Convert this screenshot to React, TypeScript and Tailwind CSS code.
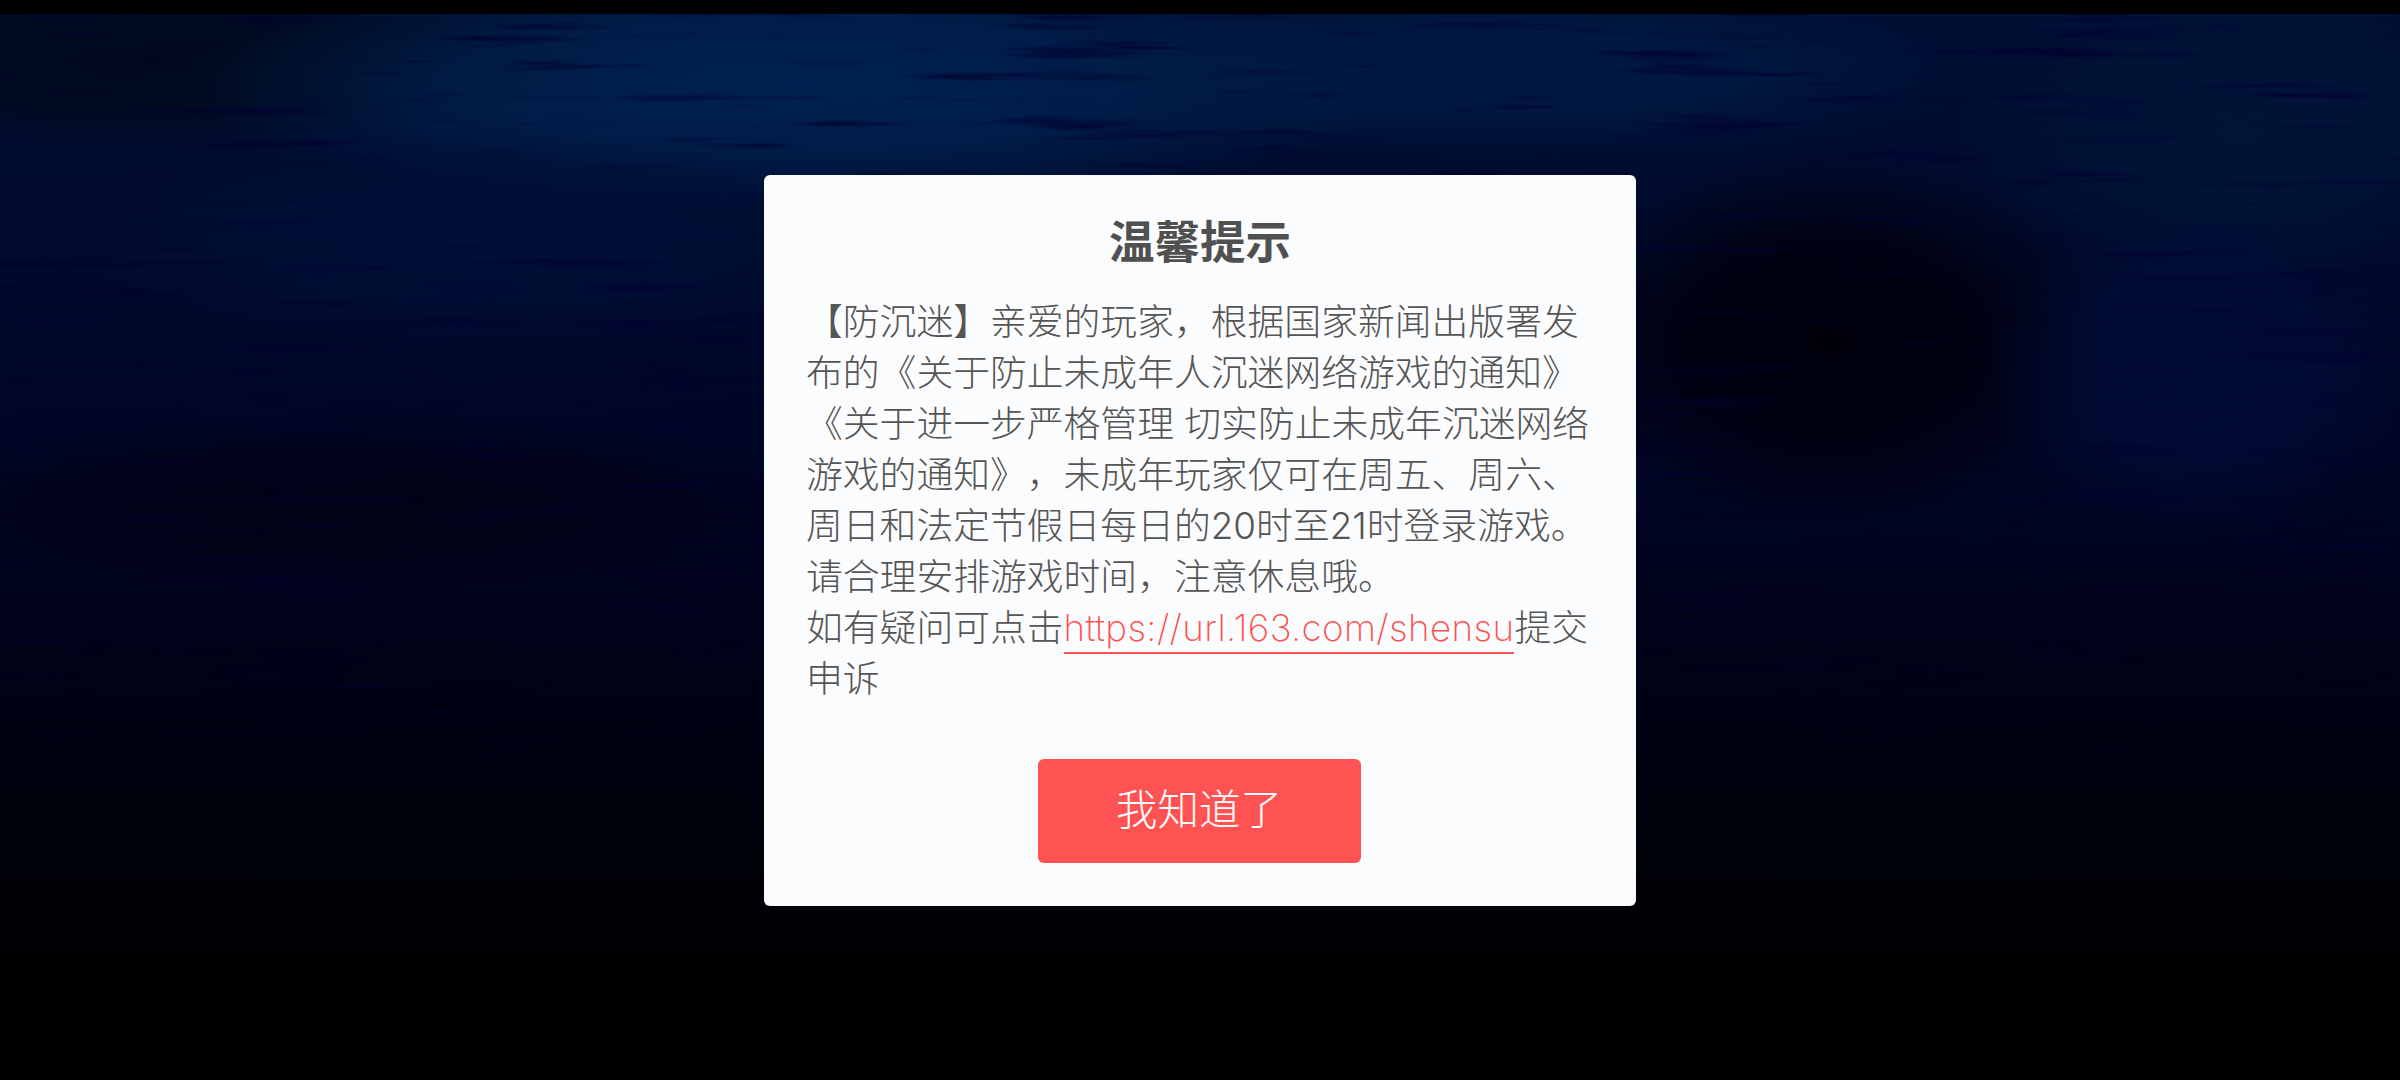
import React from "react";

const base = "font-['Inter','Liberation_Sans','Noto_Sans_CJK_SC',sans-serif]";

// soft patches of lighter and darker water
const patches = [
  { id: "p1", cx: 150, cy: 60, rx: 520, ry: 90, color: "#000818", o: 0.85 },
  { id: "p2", cx: 800, cy: 85, rx: 620, ry: 125, color: "#00214f", o: 1 },
  { id: "p3", cx: 1500, cy: 70, rx: 480, ry: 90, color: "#001c46", o: 0.8 },
  { id: "p4", cx: 2240, cy: 130, rx: 280, ry: 160, color: "#001538", o: 0.9 },
  { id: "p5", cx: 1830, cy: 340, rx: 290, ry: 190, color: "#00000c", o: 1 },
  { id: "p6", cx: 2200, cy: 370, rx: 210, ry: 170, color: "#000d3a", o: 0.8 },
  { id: "p7", cx: 500, cy: 240, rx: 420, ry: 110, color: "#001038", o: 0.8 },
  { id: "p8", cx: 360, cy: 500, rx: 480, ry: 90, color: "#00000e", o: 0.6 },
];

function Water() {
  return (
    <svg className="absolute inset-0 w-full h-full" viewBox="0 0 2400 1080" preserveAspectRatio="none">
      <defs>
        <linearGradient id="depth" x1="0" y1="0" x2="0" y2="1">
          <stop offset="0" stopColor="#000f34" />
          <stop offset="0.2" stopColor="#000b2e" />
          <stop offset="0.4" stopColor="#000626" />
          <stop offset="0.6" stopColor="#000218" />
          <stop offset="0.76" stopColor="#00020c" />
          <stop offset="0.9" stopColor="#000002" />
          <stop offset="1" stopColor="#000000" />
        </linearGradient>
        {patches.map((p) => (
          <radialGradient key={p.id} id={p.id}>
            <stop offset="0" stopColor={p.color} stopOpacity={p.o} />
            <stop offset="0.55" stopColor={p.color} stopOpacity={p.o * 0.75} />
            <stop offset="1" stopColor={p.color} stopOpacity="0" />
          </radialGradient>
        ))}
        <linearGradient id="streakFade" x1="0" y1="0" x2="0" y2="1">
          <stop offset="0" stopColor="#fff" />
          <stop offset="0.5" stopColor="#ccc" />
          <stop offset="0.85" stopColor="#555" />
          <stop offset="1" stopColor="#000" />
        </linearGradient>
        <mask id="streakMask" maskUnits="userSpaceOnUse" x="0" y="0" width="2400" height="800">
          <rect width="2400" height="800" fill="url(#streakFade)" />
        </mask>
        <filter id="streaks" filterUnits="userSpaceOnUse" x="0" y="0" width="2400" height="800">
          <feTurbulence type="fractalNoise" baseFrequency="0.005 0.085" numOctaves="4" seed="23" />
          <feColorMatrix type="matrix" values="0 0 0 0 0  0 0 0 0 0  0 0 0 0 0.03  1.9 1.9 0 0 -2.15" />
        </filter>
      </defs>
      <rect width="2400" height="1080" fill="url(#depth)" />
      {patches.map((p) => (
        <ellipse key={p.id} cx={p.cx} cy={p.cy} rx={p.rx} ry={p.ry} fill={`url(#${p.id})`} />
      ))}
      <rect width="2400" height="800" filter="url(#streaks)" mask="url(#streakMask)" />
    </svg>
  );
}

export default function App() {
  return (
    <div className={`relative flex h-[1080px] w-full items-center justify-center overflow-hidden bg-black ${base}`}>
      <Water />
      <div className="absolute inset-x-0 top-0 h-[14px] bg-black" />
      <div className="relative flex h-[731px] w-[872px] flex-col items-center rounded-[6px] bg-[#fbfcfe] px-[42px] pt-[38px] text-[#555555]">
        <h2 className="text-center text-[45.5px] font-bold leading-[60px] text-[#505050]">温馨提示</h2>
        <p className="mt-[23px] w-full text-[36.8px] leading-[51px] font-light [text-spacing-trim:space-all] break-all">
          【防沉迷】亲爱的玩家，根据国家新闻出版署发布的《关于防止未成年人沉迷网络游戏的通知》《关于进一步严格管理 切实防止未成年沉迷网络游戏的通知》，未成年玩家仅可在周五、周六、周日和法定节假日每日的20时至21时登录游戏。请合理安排游戏时间，注意休息哦。
          <br />
          如有疑问可点击
          <a href="#" className="border-b-2 border-[#ff5252] pb-[2px] font-extralight tracking-[0.37px] text-[#ff4f4f]">https://url.163.com/shensu</a>
          提交申诉
        </p>
        <button className="mt-[55px] -ml-[2px] h-[104px] w-[323px] rounded-[6px] bg-[#ff5252] text-[41.6px] font-light text-white">我知道了</button>
      </div>
    </div>
  );
}
